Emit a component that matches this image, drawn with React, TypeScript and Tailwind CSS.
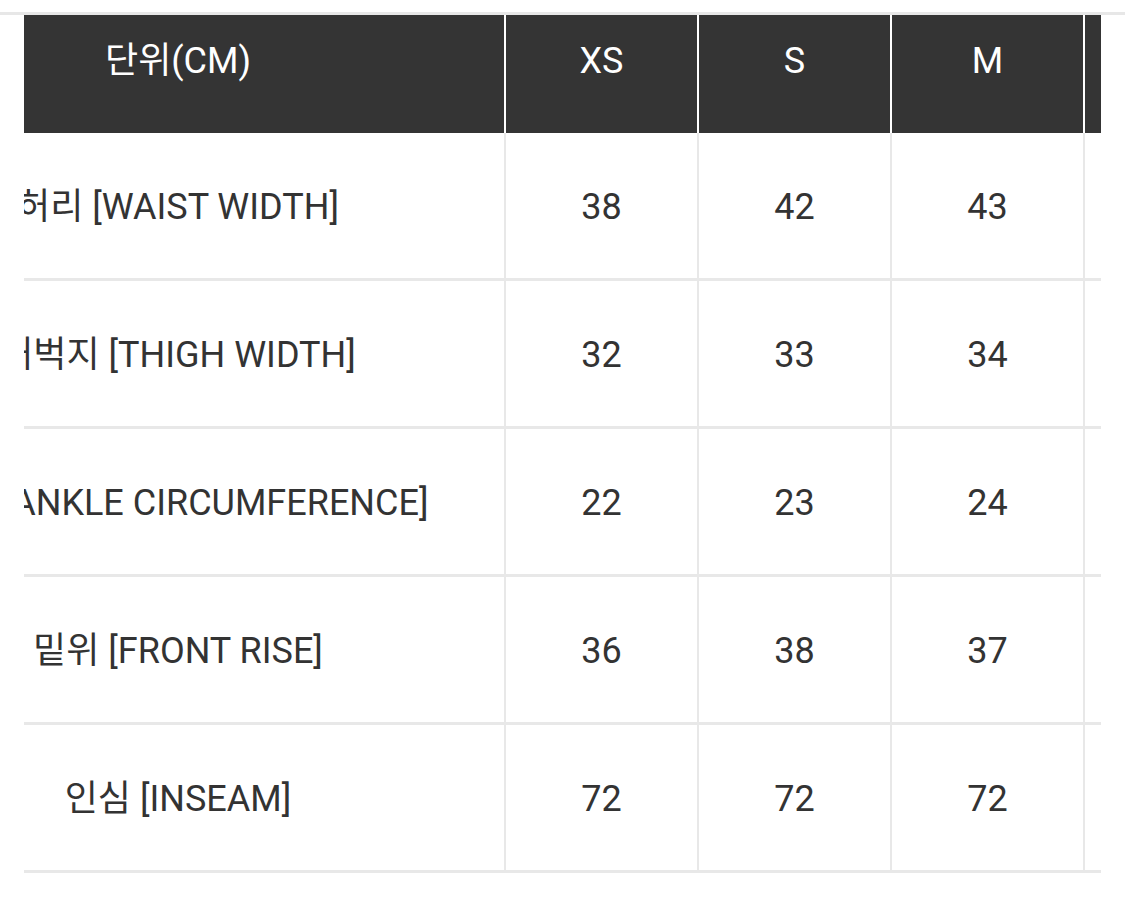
const sizes = ["XS", "S", "M", "L"];

const rows = [
  { label: "허리 [WAIST WIDTH]", values: ["38", "42", "43", "44"] },
  { label: "허벅지 [THIGH WIDTH]", values: ["32", "33", "34", "35"] },
  { label: "밑단 [ANKLE CIRCUMFERENCE]", values: ["22", "23", "24", "25"] },
  { label: "밑위 [FRONT RISE]", values: ["36", "38", "37", "38"] },
  { label: "인심 [INSEAM]", values: ["72", "72", "72", "72"] },
];

export default function App() {
  return (
    <div className="w-[1125px] h-[914px] bg-white pt-3 font-['Roboto','Noto_Sans_CJK_KR',sans-serif] text-[36px] leading-none">
      <div className="border-t-[3px] border-[#e7e7e7]">
        {/* tabela cortada nas bordas */}
        <div className="ml-6 w-[1077px] overflow-hidden">
          <div className="-ml-[172px] w-max">
            {/* cabecalho */}
            <div className="flex h-[118px] bg-[#343434] text-white">
              <div className="w-[654px] shrink-0 border-r-2 border-white flex justify-center pt-[28px]">
                단위(CM)
              </div>
              {sizes.map((s) => (
                <div
                  key={s}
                  className="w-[193px] shrink-0 border-r-2 border-white flex justify-center pt-[28px]"
                >
                  {s}
                </div>
              ))}
            </div>

            {/* linhas de medidas */}
            {rows.map((row) => (
              <div
                key={row.label}
                className="flex h-[148px] border-b-[3px] border-[#e8e8e8] text-[#333333]"
              >
                <div className="w-[654px] shrink-0 border-r-2 border-[#e8e8e8] flex items-center justify-center whitespace-nowrap pt-[3px]">
                  {row.label}
                </div>
                {row.values.map((v, i) => (
                  <div
                    key={i}
                    className="w-[193px] shrink-0 border-r-2 border-[#e8e8e8] flex items-center justify-center pt-[3px]"
                  >
                    {v}
                  </div>
                ))}
              </div>
            ))}
          </div>
        </div>
      </div>
    </div>
  );
}
